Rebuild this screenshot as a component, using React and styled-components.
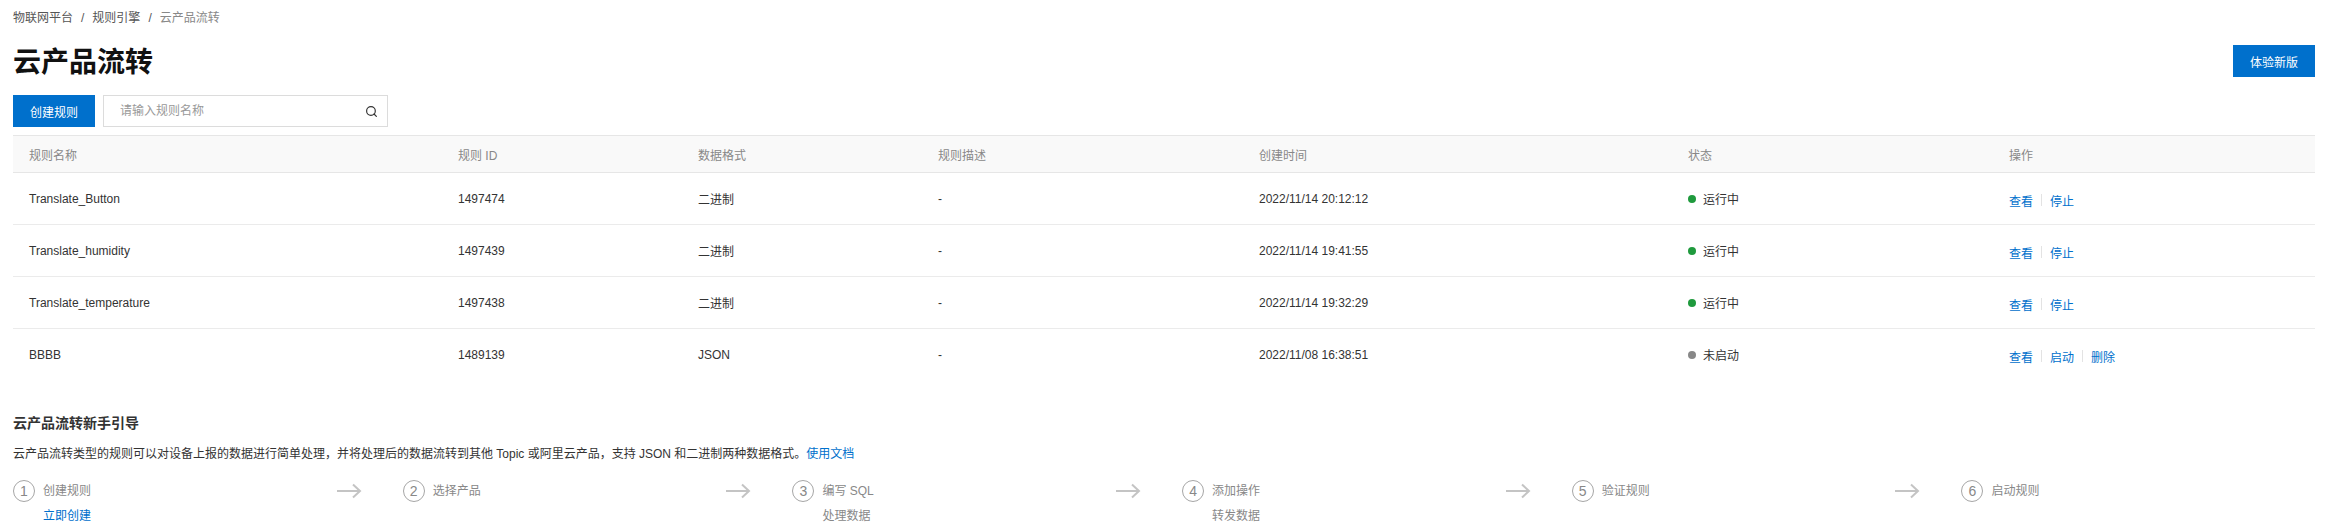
import React from 'react';
import styled, {createGlobalStyle} from 'styled-components';
import {Search} from 'lucide-react';

const GlobalStyle = createGlobalStyle`
    body {
        margin: 0;
        background: #fff;
        font-family: "Liberation Sans", "Noto Sans CJK SC", sans-serif;
        font-size: 12px;
        color: #333;
    }
`;

const Page = styled.div`
    padding: 10px 13px 0;
`;

const Breadcrumb = styled.div`
    display: flex;
    gap: 8px;
    font-size: 12px;
    line-height: 16px;
    color: #555;
`;

const Crumb = styled.span`
    color: ${p => (p.$current ? '#888' : '#555')};
`;

const TitleRow = styled.div`
    display: flex;
    justify-content: space-between;
    align-items: flex-start;
    margin-top: 19px;
`;

const Title = styled.h1`
    margin: 0;
    font-size: 28px;
    line-height: 36px;
    font-weight: 700;
    color: #111;
`;

const PrimaryButton = styled.button`
    width: 82px;
    height: 32px;
    border: none;
    background: #0070cc;
    color: #fff;
    font-family: inherit;
    font-size: 12px;
    cursor: pointer;
`;

const Toolbar = styled.div`
    display: flex;
    gap: 8px;
    margin-top: 14px;
`;

const SearchBox = styled.div`
    box-sizing: border-box;
    width: 285px;
    height: 32px;
    border: 1px solid #dcdcdc;
    display: flex;
    align-items: center;
    padding: 0 9px 0 16px;
    color: #333;
`;

const SearchInput = styled.input`
    flex: 1;
    border: none;
    outline: none;
    font-family: inherit;
    font-size: 12px;
    color: #333;
    padding: 0;
    &::placeholder {
        color: #999;
    }
`;

const Table = styled.table`
    margin-top: 8px;
    width: 100%;
    border-collapse: collapse;
    table-layout: fixed;
`;

const Col = styled.col`
    width: ${p => p.$w};
`;

const Th = styled.th`
    height: 36px;
    padding: 0 16px;
    background: #f9f9f9;
    border-top: 1px solid #e6e6e6;
    border-bottom: 1px solid #e6e6e6;
    text-align: left;
    font-weight: normal;
    color: #888;
    font-size: 12px;
`;

const Row = styled.tr`
    &:last-child td {
        border-bottom: none;
    }
`;

const Td = styled.td`
    height: 51px;
    padding: 0 16px;
    border-bottom: 1px solid #ebebeb;
    color: #333;
    font-size: 12px;
    white-space: nowrap;
`;

const Status = styled.span`
    display: inline-flex;
    align-items: center;
    gap: 7px;
`;

const Dot = styled.i`
    width: 8px;
    height: 8px;
    border-radius: 50%;
    background: ${p => (p.$on ? '#1f9a3d' : '#888')};
`;

const Actions = styled.div`
    display: flex;
    align-items: center;
    gap: 8px;
    padding-top: 3px;
`;

const Link = styled.a`
    color: #0070cc;
    text-decoration: none;
    cursor: pointer;
`;

const Divider = styled.span`
    width: 1px;
    height: 12px;
    background: #e3e3e3;
`;

const Guide = styled.section`
    margin-top: 33px;
`;

const GuideTitle = styled.h3`
    margin: 0;
    font-size: 14px;
    line-height: 20px;
    font-weight: 700;
    color: #333;
`;

const GuideText = styled.p`
    margin: 11px 0 0;
    font-size: 12px;
    line-height: 20px;
    color: #333;
`;

const Steps = styled.div`
    display: flex;
    margin-top: 16px;
`;

const Step = styled.div`
    flex: 0 0 389.7px;
    display: flex;
    align-items: flex-start;
`;

const Circle = styled.span`
    box-sizing: border-box;
    width: 22px;
    height: 22px;
    border: 1px solid #a6a6a6;
    border-radius: 50%;
    display: flex;
    align-items: center;
    justify-content: center;
    font-size: 14px;
    color: #888;
`;

const StepBody = styled.div`
    margin-left: 8px;
    display: flex;
    flex-direction: column;
    gap: 3px;
`;

const StepLabel = styled.span`
    line-height: 22px;
    color: #888;
    white-space: nowrap;
`;

const StepSub = styled.span`
    line-height: 22px;
    color: ${p => (p.$link ? '#0070cc' : '#888')};
    white-space: nowrap;
`;

const Arrow = styled.svg`
    margin-left: auto;
    margin-right: 41px;
    margin-top: 3px;
`;

const rules = [
    {name: 'Translate_Button', id: '1497474', format: '二进制', time: '2022/11/14 20:12:12', on: true},
    {name: 'Translate_humidity', id: '1497439', format: '二进制', time: '2022/11/14 19:41:55', on: true},
    {name: 'Translate_temperature', id: '1497438', format: '二进制', time: '2022/11/14 19:32:29', on: true},
    {name: 'BBBB', id: '1489139', format: 'JSON', time: '2022/11/08 16:38:51', on: false},
];

const steps = [
    {label: '创建规则', sub: '立即创建', link: true},
    {label: '选择产品'},
    {label: '编写 SQL', sub: '处理数据'},
    {label: '添加操作', sub: '转发数据'},
    {label: '验证规则'},
    {label: '启动规则'},
];

const StepArrow = () => (
    <Arrow width="26" height="16" viewBox="0 0 26 16" fill="none" stroke="#c4c4c4" strokeWidth="2">
        <path d="M1 8H24" />
        <path d="M17 1.5L24 8L17 14.5" />
    </Arrow>
);

export default function App() {
    return (
        <Page>
            <GlobalStyle />
            <Breadcrumb>
                <Crumb>物联网平台</Crumb>
                <Crumb>/</Crumb>
                <Crumb>规则引擎</Crumb>
                <Crumb>/</Crumb>
                <Crumb $current>云产品流转</Crumb>
            </Breadcrumb>

            <TitleRow>
                <Title>云产品流转</Title>
                <PrimaryButton>体验新版</PrimaryButton>
            </TitleRow>

            <Toolbar>
                <PrimaryButton>创建规则</PrimaryButton>
                <SearchBox>
                    <SearchInput placeholder="请输入规则名称" />
                    <Search size={13} strokeWidth={2.2} />
                </SearchBox>
            </Toolbar>

            <Table>
                <colgroup>
                    <Col $w="429px" />
                    <Col $w="240px" />
                    <Col $w="240px" />
                    <Col $w="321px" />
                    <Col $w="429px" />
                    <Col $w="321px" />
                    <Col $w="auto" />
                </colgroup>
                <thead>
                    <tr>
                        <Th>规则名称</Th>
                        <Th>规则 ID</Th>
                        <Th>数据格式</Th>
                        <Th>规则描述</Th>
                        <Th>创建时间</Th>
                        <Th>状态</Th>
                        <Th>操作</Th>
                    </tr>
                </thead>
                <tbody>
                    {rules.map(r => (
                        <Row key={r.id}>
                            <Td>{r.name}</Td>
                            <Td>{r.id}</Td>
                            <Td>{r.format}</Td>
                            <Td>-</Td>
                            <Td>{r.time}</Td>
                            <Td>
                                <Status>
                                    <Dot $on={r.on} />
                                    {r.on ? '运行中' : '未启动'}
                                </Status>
                            </Td>
                            <Td>
                                <Actions>
                                    <Link>查看</Link>
                                    <Divider />
                                    {r.on ? (
                                        <Link>停止</Link>
                                    ) : (
                                        <>
                                            <Link>启动</Link>
                                            <Divider />
                                            <Link>删除</Link>
                                        </>
                                    )}
                                </Actions>
                            </Td>
                        </Row>
                    ))}
                </tbody>
            </Table>

            <Guide>
                <GuideTitle>云产品流转新手引导</GuideTitle>
                <GuideText>
                    云产品流转类型的规则可以对设备上报的数据进行简单处理，并将处理后的数据流转到其他 Topic 或阿里云产品，支持 JSON 和二进制两种数据格式。
                    <Link>使用文档</Link>
                </GuideText>
                <Steps>
                    {steps.map((s, i) => (
                        <Step key={s.label}>
                            <Circle>{i + 1}</Circle>
                            <StepBody>
                                <StepLabel>{s.label}</StepLabel>
                                {s.sub && <StepSub $link={s.link}>{s.sub}</StepSub>}
                            </StepBody>
                            {i < steps.length - 1 && <StepArrow />}
                        </Step>
                    ))}
                </Steps>
            </Guide>
        </Page>
    );
}
